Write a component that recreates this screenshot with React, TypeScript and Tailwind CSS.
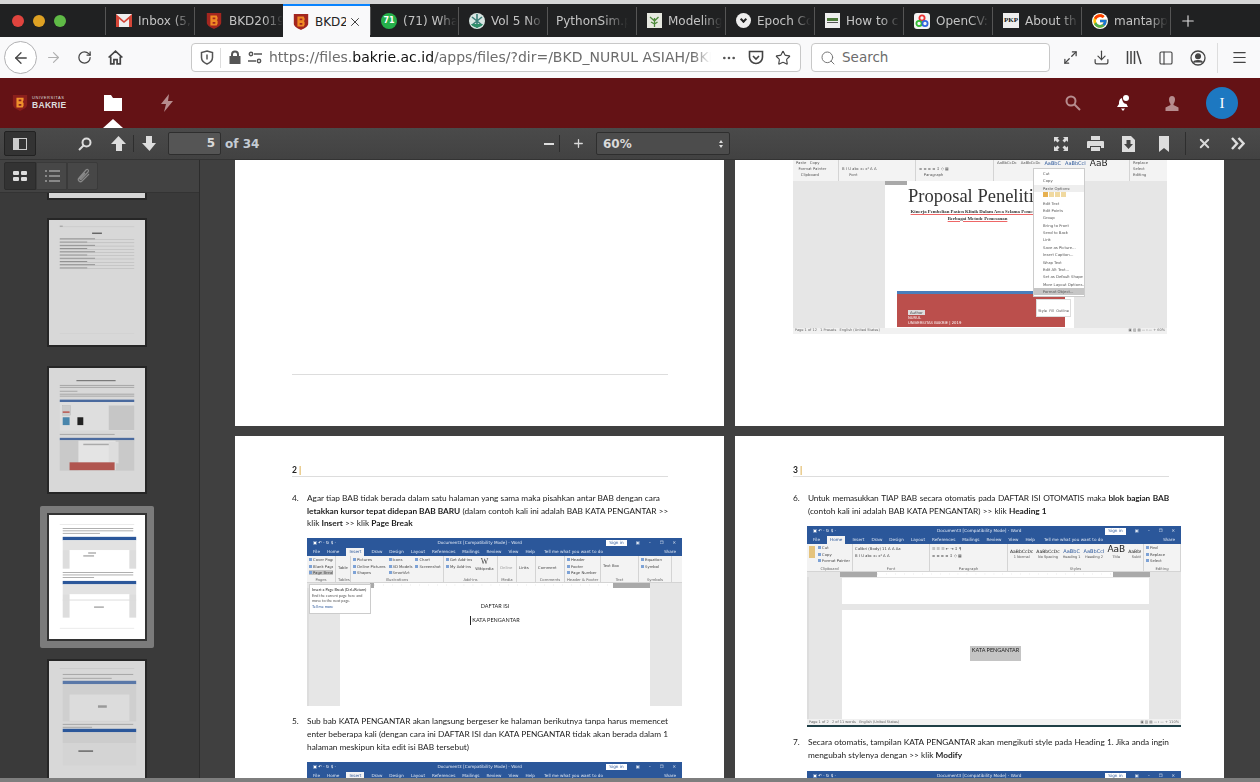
import type { ReactNode } from "react";
import { FcGoogle } from "react-icons/fc";
import {
  ArrowLeft,
  ArrowRight,
  Download,
  Ellipsis,
  Maximize2,
  Menu,
  PanelLeft,
  Plus,
  RotateCw,
  Search,
  Star,
  X,
} from "lucide-react";

const UI = "font-['DejaVu_Sans',sans-serif]";
const DOC = "font-['Lato',sans-serif]";

function Shield({ size = 18 }: { size?: number }) {
  return (
    <svg width={size} height={size} viewBox="0 0 18 20">
      <path d="M1 1h16v11c0 3-4 5-8 7-4-2-8-4-8-7z" fill="#a3261f" />
      <path d="M5 4h7l1 2v2l-1 1 1 1v3l-1 2H5z" fill="#f08a24" />
      <path d="M7.5 6h3v2h-3zM7.5 11h3v2h-3z" fill="#a3261f" />
    </svg>
  );
}

function Tab({ icon, label, active, w = "w-[89px]" }: { icon?: ReactNode; label: string; active?: boolean; w?: string }) {
  if (active) {
    return (
      <div className={`${w} h-full bg-[#f9f9fa] border-t-2 border-[#0a84ff] flex items-center pl-[9px] shrink-0`}>
        {icon}
        <span className="ml-[5px] text-[12px] text-[#222] w-[31px] overflow-hidden whitespace-nowrap">{label}</span>
        <X size={14} strokeWidth={1.6} className="ml-[2px] text-[#333]" />
      </div>
    );
  }
  return (
    <div className={`${w} h-[28px] border-l border-[#555] flex items-center pl-[10px] shrink-0`}>
      {icon && <span className="shrink-0 flex mr-[6px]">{icon}</span>}
      <span className={`${icon ? "w-[54px]" : "w-[72px] -ml-[2px]"} text-[12px] text-[#c4c4c4] overflow-hidden whitespace-nowrap [mask-image:linear-gradient(to_right,black_65%,transparent)]`}>
        {label}
      </span>
    </div>
  );
}

function TabBar() {
  return (
    <div className={`${UI} h-[33px] bg-[#202122] flex items-center shrink-0`}>
      <div className="w-[105px] flex items-center pl-[12px] gap-[9px] shrink-0">
        <span className="w-[12px] h-[12px] rounded-full bg-[#e0443e]" />
        <span className="w-[12px] h-[12px] rounded-full bg-[#dea123]" />
        <span className="w-[12px] h-[12px] rounded-full bg-[#5fba46]" />
      </div>
      <Tab
        label="Inbox (5,"
        icon={
          <svg width="16" height="13" viewBox="0 0 16 13">
            <rect width="16" height="13" fill="#eee" />
            <path d="M0 0l8 7 8-7v13h-3V5L8 9 3 5v8H0z" fill="#d44638" />
          </svg>
        }
      />
      <Tab label="BKD2019" icon={<Shield />} />
      <Tab label="BKD2" icon={<Shield />} active w="w-[87px]" />
      <Tab
        w="w-[88px]"
        label="(71) Wha"
        icon={
          <span className="w-[16px] h-[16px] rounded-full bg-[#25b04a] text-white text-[8px] font-bold flex items-center justify-center">71</span>
        }
      />
      <Tab
        label="Vol 5 No"
        icon={
          <svg width="16" height="16" viewBox="0 0 16 16">
            <circle cx="8" cy="8" r="8" fill="#d8e6e2" />
            <path d="M3 4l10 8M13 4L3 12M8 1v14" stroke="#3c7f78" strokeWidth="1.6" />
            <path d="M2 11a7 7 0 0 0 12 0z" fill="#2f8f6a" />
          </svg>
        }
      />
      <Tab label="PythonSim.pdf" />
      <Tab
        label="Modeling"
        icon={
          <svg width="15" height="15" viewBox="0 0 15 15">
            <rect width="15" height="15" fill="#e6e8e0" />
            <path d="M7.5 14V5M7.5 8L3 4M7.5 8l4-4M7.5 11L4 9M7.5 11l3-2" stroke="#4d8a3a" strokeWidth="1.3" />
          </svg>
        }
      />
      <Tab
        label="Epoch Co"
        icon={
          <span className="w-[15px] h-[15px] rounded-full bg-[#eee] flex items-center justify-center">
            <span className="w-[5px] h-[5px] rotate-45 border-r-2 border-b-2 border-[#222] -mt-[2px]" />
          </span>
        }
      />
      <Tab
        label="How to c"
        icon={
          <span className="w-[15px] h-[15px] bg-[#eee] flex flex-col justify-center items-center gap-[1px]">
            <span className="w-[11px] h-[3px] bg-[#4d7a3a]" />
            <span className="w-[11px] h-[1px] bg-[#555]" />
          </span>
        }
      />
      <Tab
        label="OpenCV:"
        icon={
          <svg width="16" height="16" viewBox="0 0 16 16">
            <rect width="16" height="16" rx="3" fill="#f4f4f4" />
            <circle cx="8" cy="5" r="2.6" fill="none" stroke="#e33" strokeWidth="1.8" />
            <circle cx="5" cy="10.5" r="2.6" fill="none" stroke="#3b3" strokeWidth="1.8" />
            <circle cx="11" cy="10.5" r="2.6" fill="none" stroke="#36d" strokeWidth="1.8" />
          </svg>
        }
      />
      <Tab
        label="About th"
        icon={<span className="w-[16px] h-[15px] bg-[#eee] text-[#111] text-[7px] leading-[15px] text-center font-['Liberation_Serif',serif] font-bold">PKP</span>}
      />
      <Tab label="mantapp" icon={<FcGoogle size={16} className="bg-white rounded-full" />} />
      <div className="h-[28px] border-l border-[#555] pl-[8px] flex items-center">
        <Plus size={18} strokeWidth={1.5} className="text-[#ddd]" />
      </div>
    </div>
  );
}

function NavBar() {
  return (
    <div className={`${UI} h-[41px] bg-[#f9f9fa] flex items-center shrink-0 text-[#444]`}>
      <div className="ml-[4px] w-[33px] h-[33px] rounded-full border border-[#b1b1b3] bg-white flex items-center justify-center shrink-0">
        <ArrowLeft size={18} strokeWidth={1.7} />
      </div>
      <ArrowRight size={17} strokeWidth={1.6} className="ml-[8px] text-[#b0b0b0] shrink-0" />
      <RotateCw size={15} strokeWidth={2} className="ml-[15px] shrink-0" />
      <svg width="17" height="17" viewBox="0 0 16 16" className="ml-[15px] shrink-0" fill="none" stroke="#444" strokeWidth="1.6">
        <path d="M1.5 8L8 2l6.5 6M3.5 7v7h3v-4h3v4h3V7" />
      </svg>
      <div className="ml-[67px] w-[610px] h-[29px] bg-white border border-[#c8c8c8] rounded-[4px] flex items-center shrink-0">
        <svg width="14" height="15" viewBox="0 0 14 15" className="ml-[8px]" fill="none" stroke="#555" strokeWidth="1.5">
          <path d="M7 1l5.5 1.5v5C12.5 11 9.5 13 7 14 4.5 13 1.5 11 1.500 7.500v-5zM7 4.500v5" />
        </svg>
        <span className="ml-[6px] w-px h-[20px] bg-[#ddd]" />
        <svg width="14" height="15" viewBox="0 0 14 15" className="ml-[7px]" fill="#555">
          <path d="M3 6V4.500a4 4 0 0 1 8 0V6h1.500v8h-11V6zm2 0h4V4.500a2 2 0 0 0-4 0z" />
        </svg>
        <svg width="14" height="13" viewBox="0 0 14 13" className="ml-[6px]" fill="none" stroke="#555" strokeWidth="1.4">
          <circle cx="3" cy="3" r="1.700" />
          <circle cx="11" cy="10" r="1.700" />
          <path d="M6 3h8M0 10h8" />
        </svg>
        <span className="ml-[7px] text-[14px] text-[#6c6c6c] w-[442px] overflow-hidden whitespace-nowrap [mask-image:linear-gradient(to_right,black_96%,transparent)]">
          https://files.<span className="text-[#111]">bakrie.ac.id</span>/apps/files/?dir=/BKD_NURUL ASIAH/BKD_2019
        </span>
        <Ellipsis size={16} className="ml-[10px] text-[#555]" />
        <svg width="16" height="15" viewBox="0 0 16 15" className="ml-[11px]" fill="none" stroke="#444" strokeWidth="1.6">
          <path d="M1.500 1.500h13V7a6.500 6.500 0 0 1-13 0zM5 6l3 3 3-3" />
        </svg>
        <Star size={16} strokeWidth={1.7} className="ml-[11px] text-[#444]" />
      </div>
      <div className="ml-[10px] w-[239px] h-[29px] bg-white border border-[#c8c8c8] rounded-[4px] flex items-center shrink-0">
        <Search size={16} strokeWidth={1.5} className="ml-[8px] text-[#777]" />
        <span className="ml-[6px] text-[13.500px] text-[#6c6c6c]">Search</span>
      </div>
      <Maximize2 size={15} strokeWidth={2} className="ml-[13px] shrink-0" />
      <Download size={17} strokeWidth={1.7} className="ml-[15px] shrink-0" />
      <svg width="16" height="15" viewBox="0 0 16 15" className="ml-[16px] shrink-0" stroke="#444" strokeWidth="1.500" fill="none">
        <path d="M1.500 1v13M5 1v13M8.500 1v13M11 1l4 13" />
      </svg>
      <PanelLeft size={16} strokeWidth={1.7} className="ml-[16px] shrink-0" />
      <svg width="16" height="16" viewBox="0 0 16 16" className="ml-[16px] shrink-0" fill="none" stroke="#444" strokeWidth="1.300">
        <circle cx="8" cy="8" r="7" />
        <circle cx="8" cy="6.300" r="2.400" fill="#444" />
        <path d="M3.500 12.500c1-2.500 8-2.500 9 0" fill="#444" />
      </svg>
      <span className="ml-[11px] w-px h-[30px] bg-[#ddd] shrink-0" />
      <Menu size={17} strokeWidth={1.7} className="ml-[13px] shrink-0" />
    </div>
  );
}

function AppHeader() {
  return (
    <div className="h-[50px] bg-[#641215] flex items-center shrink-0 relative">
      <div className="ml-[12px] w-[60px] flex items-center shrink-0">
        <svg width="16" height="18" viewBox="0 0 18 20">
          <path d="M1 1h16v11c0 3-4 5-8 7-4-2-8-4-8-7z" fill="#8a1f1c" />
          <path d="M5 4h8v3l-1 2 1 1v3l-1 2H5zM7.500 6v2h3V6zm0 5v2h3v-2z" fill="#f0922c" fillRule="evenodd" />
        </svg>
        <div className="ml-[4px] font-['Liberation_Sans',sans-serif] text-[#ddd] leading-none">
          <div className="text-[4px] tracking-[0.55px] mb-[1px]">UNIVERSITAS</div>
          <div className="text-[8.500px] font-bold tracking-[0.3px]">BAKRIE</div>
        </div>
      </div>
      <svg width="18" height="16" viewBox="0 0 18 16" className="ml-[32px] shrink-0" fill="#fff">
        <path d="M0 0h7l2 3h9v13H0z" />
      </svg>
      <svg width="13" height="18" viewBox="0 0 13 18" className="ml-[39px] shrink-0" fill="#b68c8e">
        <path d="M8 0L0 10h5l-2 8 9-11H7z" />
      </svg>
      <span className="absolute left-[103px] bottom-0 w-0 h-0 border-x-[10px] border-x-transparent border-b-[9px] border-b-white" />
      <div className="ml-auto flex items-center">
        <svg width="16" height="16" viewBox="0 0 16 16" fill="none" stroke="#b68c8e" strokeWidth="2">
          <circle cx="6" cy="6" r="4.500" />
          <path d="M9.500 9.500L15 15" />
        </svg>
        <svg width="14" height="17" viewBox="0 0 14 17" className="ml-[35px]" fill="#fff">
          <path d="M6 3C3 4 3 7 3 9l-2 3h11l-1.500-3C8 9 6 6 6 3zM5 13.500h4L7 16z" />
          <circle cx="10" cy="3" r="3" />
        </svg>
        <svg width="16" height="17" viewBox="0 0 16 17" className="ml-[34px]" fill="#b68c8e">
          <path d="M8 1c2 0 3 1.500 3 3.500 0 2-1 3.500-1.500 4.500v1l5 2.500V16H1.500v-3.500l5-2.500V9C6 8 5 6.500 5 4.500 5 2.500 6 1 8 1z" />
        </svg>
        <div className="ml-[26px] mr-[22px] w-[32px] h-[32px] rounded-full bg-[#1d78c1] flex items-center justify-center text-white text-[15px] font-['Liberation_Serif',serif]">
          I
        </div>
      </div>
    </div>
  );
}

function PdfToolbar() {
  return (
    <div className={`${UI} h-[32px] bg-gradient-to-b from-[#4a4a4a] to-[#424242] border-b border-[#333] flex items-center shrink-0 text-[#d9d9d9]`}>
      <div className="ml-[4px] w-[32px] h-[25px] bg-[#333] border border-[#222] rounded-[2px] flex items-center justify-center shrink-0">
        <span className="w-[14px] h-[12px] border border-[#ccc] flex">
          <span className="w-[5px] bg-[#ccc]" />
        </span>
      </div>
      <svg width="14" height="14" viewBox="0 0 14 14" className="ml-[42px] shrink-0" fill="none" stroke="#ddd" strokeWidth="2">
        <circle cx="8.500" cy="5.500" r="4" />
        <path d="M5.500 8.500L1 13" />
      </svg>
      <svg width="15" height="15" viewBox="0 0 15 15" className="ml-[19px] shrink-0" fill="#ddd">
        <path d="M7.500 0L15 8h-4v7H5V8H0z" />
      </svg>
      <span className="ml-[7px] w-px h-[17px] bg-[#2e2e2e] shrink-0" />
      <svg width="15" height="15" viewBox="0 0 15 15" className="ml-[8px] shrink-0" fill="#ddd">
        <path d="M7.500 15L0 7h4V0h6v7h4z" />
      </svg>
      <div className="ml-[11px] w-[53px] h-[23px] bg-[#555] border border-[#2e2e2e] rounded-[2px] text-right pr-[5px] text-[12px] font-bold leading-[21px] shrink-0">5</div>
      <span className="ml-[4px] text-[12px] font-bold text-[#c5ccd4] w-[32px] whitespace-nowrap shrink-0">of 34</span>
      <span className="ml-[287px] w-[10px] h-[2px] bg-[#ddd] shrink-0" />
      <span className="ml-[5px] w-px h-[17px] bg-[#2e2e2e] shrink-0" />
      <Plus size={13} strokeWidth={2.4} className="ml-[12px] shrink-0" />
      <div className="ml-[11px] w-[134px] h-[23px] bg-[#4c4c4c] border border-[#2e2e2e] rounded-[2px] flex items-center pl-[6px] pr-[6px] text-[12px] font-bold shrink-0">
        60%
        <span className="ml-auto flex flex-col gap-[2px]">
          <span className="w-0 h-0 border-x-[2.500px] border-x-transparent border-b-[3px] border-b-[#ddd]" />
          <span className="w-0 h-0 border-x-[2.500px] border-x-transparent border-t-[3px] border-t-[#ddd]" />
        </span>
      </div>
      <svg width="14" height="14" viewBox="0 0 14 14" className="ml-[324px] shrink-0" fill="#ddd">
        <path d="M0 0h5L3.500 1.500 5.500 3.500 3.500 5.500 1.500 3.500 0 5zM14 0v5l-1.500-1.500-2 2-2-2 2-2L9 0zM0 14V9l1.500 1.500 2-2 2 2-2 2L5 14zM14 14H9l1.500-1.500-2-2 2-2 2 2L14 9z" />
      </svg>
      <svg width="17" height="15" viewBox="0 0 17 15" className="ml-[19px] shrink-0" fill="#ddd">
        <path d="M4 0h9v4H4zM1 5h15a1 1 0 0 1 1 1v6h-3v-2H3v2H0V6a1 1 0 0 1 1-1zM4 11h9v4H4z" />
      </svg>
      <svg width="13" height="16" viewBox="0 0 13 16" className="ml-[18px] shrink-0">
        <path d="M0 0h9l4 4v12H0z" fill="#ddd" />
        <path d="M4.500 4h4v4h2.500l-4.500 5L2 8h2.500z" fill="#444" />
      </svg>
      <svg width="10" height="16" viewBox="0 0 10 16" className="ml-[24px] shrink-0" fill="#ddd">
        <path d="M0 0h10v16l-5-4-5 4z" />
      </svg>
      <span className="ml-[16px] w-px h-[23px] bg-[#2e2e2e] shrink-0" />
      <X size={15} strokeWidth={3} className="ml-[11px] shrink-0" />
      <svg width="14" height="13" viewBox="0 0 14 13" className="ml-[19px] shrink-0" fill="none" stroke="#ddd" strokeWidth="2.400">
        <path d="M1 1l5 5.500L1 12M7.500 1l5 5.500-5 5.500" />
      </svg>
    </div>
  );
}

// page thumbnails are just pictures, so they are drawn
function ThumbToc() {
  const rows = [0, 1, 2, 3, 4, 5, 6, 7, 8, 9];
  return (
    <svg viewBox="0 0 98 126" className="w-full h-full blur-[0.4px]">
      <rect x="11" y="6" width="76" height="0.4" fill="#bbb" />
      <rect x="11" y="5" width="3" height="1" fill="#999" />
      <rect x="44" y="12" width="10" height="1.500" fill="#666" />
      {rows.map((i) => (
        <g key={i}>
          <rect x="11" y={19 + i * 3.300 - 1} width={i % 2 ? 28 : 36} height="0.9" fill="#888" />
          <rect x="11" y={19 + i * 3.300} width="76" height="0.4" fill="#aaa" />
        </g>
      ))}
      <rect x="11" y="115" width="76" height="0.4" fill="#ccc" />
    </svg>
  );
}

function ThumbProposal() {
  return (
    <svg viewBox="0 0 98 126" className="w-full h-full blur-[0.4px]">
      <rect x="28" y="12" width="40" height="1.200" fill="#777" />
      {[17, 19, 23, 26, 28].map((y) => (
        <rect key={y} x="11" y={y} width={y === 23 ? 18 : 76} height="0.8" fill="#999" />
      ))}
      <rect x="11" y="32" width="76" height="2.500" fill="#4a6a9e" />
      <rect x="11" y="34.500" width="76" height="29" fill="#dedede" />
      <rect x="61" y="38" width="26" height="25" fill="#c6c6c6" />
      <rect x="14" y="38" width="8" height="10" fill="#ccc" stroke="#aaa" strokeWidth="0.3" />
      <rect x="14" y="44" width="7" height="1.500" fill="#b9554f" />
      <rect x="14" y="50" width="7" height="8" fill="#4a86ac" />
      <rect x="29" y="50" width="6" height="8" fill="#222" />
      <rect x="11" y="67" width="56" height="0.8" fill="#999" />
      <rect x="11" y="71" width="76" height="2.500" fill="#4a6a9e" />
      <rect x="11" y="73.500" width="76" height="31" fill="#c9c9c9" />
      <rect x="30" y="74" width="38" height="30" fill="#e4e4e4" />
      <rect x="35" y="77" width="28" height="1.500" fill="#aaa" />
      <rect x="61" y="75" width="10" height="22" fill="#ddd" />
      <rect x="21" y="96" width="46" height="8" fill="#b0554f" />
    </svg>
  );
}

function ThumbCurrent() {
  return (
    <svg viewBox="0 0 98 126" className="w-full h-full blur-[0.4px]">
      <rect x="11" y="9" width="76" height="0.4" fill="#ccc" />
      {[13, 15.500, 18].map((y, i) => (
        <rect key={y} x="14" y={y} width={i === 2 ? 38 : 72} height="0.8" fill="#999" />
      ))}
      <rect x="14" y="22" width="75" height="3.500" fill="#2b579a" />
      <rect x="14" y="25.500" width="75" height="10" fill="#e2e2e2" />
      <rect x="14" y="35.500" width="7" height="19" fill="#ddd" />
      <rect x="82" y="35.500" width="7" height="19" fill="#ddd" />
      <rect x="40" y="38" width="8" height="1" fill="#888" />
      <rect x="35" y="41" width="11" height="1" fill="#888" />
      {[58, 60.500, 63].map((y, i) => (
        <rect key={y} x="14" y={y} width={i === 2 ? 32 : 72} height="0.8" fill="#999" />
      ))}
      <rect x="14" y="67" width="75" height="3.500" fill="#2b579a" />
      <rect x="14" y="70.500" width="75" height="10" fill="#e2e2e2" />
      <rect x="14" y="80.500" width="7" height="24" fill="#ddd" />
      <rect x="82" y="80.500" width="7" height="24" fill="#ddd" />
      <rect x="14" y="86" width="75" height="1" fill="#ddd" />
      <rect x="46" y="93" width="10" height="1.500" fill="#aaa" />
      <rect x="11" y="115" width="76" height="0.4" fill="#ccc" />
    </svg>
  );
}

function ThumbNext() {
  return (
    <svg viewBox="0 0 98 117" className="w-full h-full blur-[0.4px]">
      <rect x="11" y="6" width="76" height="0.4" fill="#bbb" />
      {[12, 16].map((y) => (
        <rect key={y} x="14" y={y} width={y === 16 ? 50 : 72} height="0.8" fill="#999" />
      ))}
      <rect x="14" y="19" width="75" height="3.500" fill="#5a78a8" />
      <rect x="14" y="22.500" width="75" height="38" fill="#cfcfcf" />
      <rect x="21" y="33" width="61" height="27" fill="#dcdcdc" />
      <rect x="50" y="44" width="9" height="2.500" fill="#999" />
      {[63, 66].map((y) => (
        <rect key={y} x="14" y={y} width={y === 66 ? 30 : 72} height="0.8" fill="#999" />
      ))}
      <rect x="14" y="68" width="75" height="3.500" fill="#2b579a" />
      <rect x="14" y="71.500" width="75" height="11" fill="#ccc" />
      <rect x="14" y="82.500" width="75" height="23" fill="#d4d4d4" />
      <rect x="30" y="90" width="15" height="1.500" fill="#666" />
    </svg>
  );
}

function Sidebar() {
  return (
    <div className="w-[200px] shrink-0 bg-[#3a3a3a] border-r border-[#2c2c2c] flex flex-col overflow-hidden">
      <div className="h-[33px] shrink-0 bg-[#424242] border-b border-[#333] flex items-center pl-[4px]">
        <div className="w-[32px] h-[28px] bg-[#333] border border-[#2b2b2b] rounded-l-[2px] grid grid-cols-2 gap-[2px] p-[8px]">
          <span className="bg-[#ddd] rounded-[1px]" />
          <span className="bg-[#ddd] rounded-[1px]" />
          <span className="bg-[#ddd] rounded-[1px]" />
          <span className="bg-[#ddd] rounded-[1px]" />
        </div>
        <div className="w-[31px] h-[28px] bg-[#474747] border border-[#3a3a3a] flex flex-col justify-center gap-[3px] pl-[8px]">
          {[0, 1, 2].map((i) => (
            <span key={i} className="flex gap-[2px]">
              <span className="w-[2px] h-[2px] bg-[#888]" />
              <span className="w-[11px] h-[2px] bg-[#888]" />
            </span>
          ))}
        </div>
        <div className="w-[31px] h-[28px] bg-[#474747] border border-[#3a3a3a] rounded-r-[2px] flex items-center justify-center">
          <svg width="16" height="16" viewBox="0 0 16 16" fill="none" stroke="#888" strokeWidth="1.200">
            <path d="M14 6l-7 7c-2 2-5-1-3-3l7-8c1.500-1.500 3.500.5 2 2l-7 7.500c-.5.5-1.500-.5-1-1L10 5" />
          </svg>
        </div>
      </div>
      <div className="w-[100px] h-[7px] ml-[47px] bg-[#d6d6d6] border-x-2 border-b-2 border-[#262626] shrink-0" />
      <div className="w-[100px] h-[129px] mt-[18px] ml-[47px] bg-[#d8d8d8] border-2 border-[#262626] shrink-0">
        <ThumbToc />
      </div>
      <div className="w-[100px] h-[128px] mt-[19px] ml-[47px] bg-[#d8d8d8] border-2 border-[#262626] shrink-0">
        <ThumbProposal />
      </div>
      <div className="w-[114px] h-[142px] mt-[12px] ml-[40px] bg-[#7b7b7b] rounded-[2px] p-[7px] shrink-0">
        <div className="h-full bg-white border-2 border-[#333]">
          <ThumbCurrent />
        </div>
      </div>
      <div className="w-[100px] h-[119px] mt-[11px] ml-[47px] bg-[#d8d8d8] border-2 border-b-0 border-[#262626] shrink-0">
        <ThumbNext />
      </div>
    </div>
  );
}

function WordTitle({ active, title = "Document3 [Compatibility Mode]  -  Word" }: { active: string; title?: string }) {
  const tabs = ["File", "Home", "Insert", "Draw", "Design", "Layout", "References", "Mailings", "Review", "View", "Help"];
  return (
    <div className="bg-[#2b579a] text-[#dfe7f3] shrink-0">
      <div className="h-[10px] flex items-center px-[6px] text-[4.200px] leading-none">
        <span className="w-[40px] text-white whitespace-nowrap">▣ ↶ · ↻ $ ·</span>
        <span className="flex-1 text-center whitespace-nowrap">{title}</span>
        <span className="bg-white text-[#2b579a] px-[3px] py-[1px]">Sign in</span>
        <span className="ml-[9px]">▣</span>
        <span className="ml-[9px]">–</span>
        <span className="ml-[9px]">❐</span>
        <span className="ml-[9px]">✕</span>
      </div>
      <div className="h-[8px] flex items-center pl-[6px] text-[4.200px] leading-none gap-[7px] whitespace-nowrap">
        {tabs.map((t) =>
          t === active ? (
            <span key={t} className="bg-[#f3f3f3] text-[#2b579a] h-full px-[3px] flex items-center">{t}</span>
          ) : (
            <span key={t}>{t}</span>
          )
        )}
        <span className="ml-[2px]">Tell me what you want to do</span>
        <span className="ml-auto mr-[6px]">Share</span>
      </div>
    </div>
  );
}

function Group({ label, w, children }: { label: string; w: string; children: ReactNode }) {
  return (
    <div className={`${w} shrink-0 h-full border-r border-[#d4d4d4] flex flex-col px-[2px] pt-[1px]`}>
      <div className="flex-1 flex gap-[3px] overflow-hidden">{children}</div>
      <div className="text-center text-[3.800px] leading-[5px] text-[#666] whitespace-nowrap">{label}</div>
    </div>
  );
}

function Stack({ items, hi }: { items: string[]; hi?: string }) {
  return (
    <div className="flex flex-col gap-[1.500px] text-[3.800px] leading-[5px] text-[#444] whitespace-nowrap">
      {items.map((i) => (
        <span key={i} className={`flex items-center gap-[1px] ${i === hi ? "bg-[#c6c6c6]" : ""}`}>
          <span className="w-[3px] h-[3px] bg-[#7da2d6]" />
          {i}
        </span>
      ))}
    </div>
  );
}

function InsertRibbon() {
  return (
    <div className="h-[27px] bg-[#f3f3f3] border-b border-[#d4d4d4] flex shrink-0">
      <Group label="Pages" w="w-[29px]">
        <Stack items={["Cover Page", "Blank Page", "Page Break"]} hi="Page Break" />
      </Group>
      <Group label="Tables" w="w-[15px]"><span className="text-[3.800px] text-[#444] mt-[8px]">Table</span></Group>
      <Group label="Illustrations" w="w-[93px]">
        <Stack items={["Pictures", "Online Pictures", "Shapes"]} />
        <Stack items={["Icons", "3D Models", "SmartArt"]} />
        <Stack items={["Chart", "Screenshot"]} />
      </Group>
      <Group label="Add-ins" w="w-[54px]">
        <Stack items={["Get Add-ins", "My Add-ins"]} />
        <div className="text-[3.800px] text-[#444] text-center"><div className="text-[8px] leading-[9px] font-['Liberation_Serif',serif]">W</div>Wikipedia</div>
      </Group>
      <Group label="Media" w="w-[19px]"><span className="text-[3.800px] text-[#999] mt-[8px]">Online</span></Group>
      <Group label="" w="w-[19px]"><span className="text-[3.800px] text-[#444] mt-[8px]">Links</span></Group>
      <Group label="Comments" w="w-[29px]"><span className="text-[3.800px] text-[#444] mt-[8px]">Comment</span></Group>
      <Group label="Header & Footer" w="w-[36px]">
        <Stack items={["Header", "Footer", "Page Number"]} />
      </Group>
      <Group label="Text" w="w-[38px]"><span className="text-[3.800px] text-[#444] mt-[6px]">Text Box</span></Group>
      <Group label="Symbols" w="w-[33px]">
        <Stack items={["Equation", "Symbol"]} />
      </Group>
    </div>
  );
}

function HomeRibbon() {
  const styles = ["AaBbCcDc", "AaBbCcDc", "AaBbC", "AaBbCcI", "AaB", "AaBbCcC"];
  const names = ["1 Normal", "No Spacing", "Heading 1", "Heading 2", "Title", "Subtitle"];
  return (
    <div className="h-[28px] bg-[#f3f3f3] border-b border-[#d4d4d4] flex shrink-0">
      <Group label="Clipboard" w="w-[46px]">
        <span className="w-[8px] h-[12px] bg-[#e5c37c] mt-[1px]" />
        <Stack items={["Cut", "Copy", "Format Painter"]} />
      </Group>
      <Group label="Font" w="w-[77px]">
        <div className="text-[3.800px] leading-[7px] text-[#444] whitespace-nowrap">
          Calibri (Body) 11 A A Aa
          <br />
          B I U abc x₂ x² A A
        </div>
      </Group>
      <Group label="Paragraph" w="w-[78px]">
        <div className="text-[3.800px] leading-[7px] text-[#444] whitespace-nowrap">
          ☰ ☰ ☰ ⇤ ⇥ ↕ ¶
          <br />
          ≡ ≡ ≡ ≡ ↕ ◇ ▦
        </div>
      </Group>
      <Group label="Styles" w="w-[136px]">
        {styles.map((s, i) => (
          <div key={s + i} className="text-center whitespace-nowrap leading-none">
            <div className={`${i === 4 ? "text-[9px] text-[#222]" : i > 1 && i < 4 ? "text-[5px] text-[#2b579a]" : "text-[4.500px] text-[#222]"} h-[9px] flex items-end justify-center`}>{s}</div>
            <div className="text-[3.500px] text-[#555] mt-[2px]">{names[i]}</div>
          </div>
        ))}
      </Group>
      <Group label="Editing" w="w-[37px]">
        <Stack items={["Find", "Replace", "Select"]} />
      </Group>
    </div>
  );
}

function Ruler({ pad, left, mid }: { pad: string; left: string; mid: string }) {
  return (
    <div className="h-[5px] bg-[#e6e6e6] flex shrink-0">
      <span className={`${pad} shrink-0`} />
      <span className={`${left} bg-[#a9a9a9] shrink-0`} />
      <span className={`${mid} shrink-0 bg-white text-[3px] leading-[5px] text-[#888] tracking-[8px] overflow-hidden whitespace-nowrap`}>·······························</span>
      <span className="w-[37px] bg-[#a9a9a9] shrink-0" />
    </div>
  );
}

function VRuler({ children }: { children: ReactNode }) {
  return <div className="flex-1 flex border-l-2 border-[#ddd] bg-[#e6e6e6] overflow-hidden min-h-0">{children}</div>;
}

function Para({ n, lines }: { n: string; lines: { text: ReactNode; justify?: boolean; tight?: boolean }[] }) {
  return (
    <div className={`${DOC} text-[8.300px] leading-[12.700px] text-[#222] flex`}>
      <span className="w-[15px] shrink-0">{n}</span>
      <div className="w-[361px] shrink-0">
        {lines.map((l, i) => (
          <div key={i} className={`${l.justify ? "[text-align-last:justify]" : "whitespace-nowrap"} ${l.tight ? "tracking-[-0.15px]" : ""}`}>
            {l.text}
          </div>
        ))}
      </div>
    </div>
  );
}

function PageHead({ n }: { n: string }) {
  return (
    <div className={`${DOC} h-[41px] pt-[29px] text-[8.500px] leading-[10px] font-bold text-[#222]`}>
      <div className="border-b border-[#ddd] h-[12px]">
        {n} <span className="text-[#d9a63a]">|</span>
      </div>
    </div>
  );
}

function PageTwo() {
  return (
    <div className="w-[489px] shrink-0 bg-white pl-[57px] pr-[56px] overflow-hidden blur-[0.25px]">
      <PageHead n="2" />
      <div className="mt-[15px]">
        <Para
          n="4."
          lines={[
            { text: "Agar tiap BAB tidak berada dalam satu halaman yang sama maka pisahkan antar BAB dengan cara" },
            { text: <><b>letakkan kursor tepat didepan BAB BARU</b> (dalam contoh kali ini adalah BAB KATA PENGANTAR &gt;&gt;</> },
            { text: <>klik <b>Insert</b> &gt;&gt; klik <b>Page Break</b></> },
          ]}
        />
      </div>
      <div className={`${UI} mt-[8px] ml-[15px] w-[375px] h-[168px] flex flex-col relative`}>
        <WordTitle active="Insert" />
        <InsertRibbon />
        <Ruler pad="w-[63px]" left="w-[4px]" mid="w-[239px]" />
        <VRuler>
          <span className="w-[31px] shrink-0" />
          <div className={`${DOC} flex-1 bg-white flex flex-col items-center text-[5.500px] text-[#222]`}>
            <span className="mt-[14px]">DAFTAR ISI</span>
            <span className="mt-[6px] border-l border-[#222] pl-[1px]">KATA PENGANTAR</span>
          </div>
          <span className="w-[32px] shrink-0" />
        </VRuler>
        <div className={`${DOC} absolute left-[2px] top-[46px] w-[62px] h-[30px] bg-white border border-[#ccc] p-[2px] text-[3.800px] leading-[5px] text-[#555]`}>
          <div className="text-[#222] whitespace-nowrap">Insert a Page Break (Ctrl+Return)</div>
          <div className="mt-[1px]">End the current page here and move to the next page.</div>
          <div className="mt-[1px] text-[#2b579a]">Tell me more</div>
        </div>
      </div>
      <div className="mt-[9px]">
        <Para
          n="5."
          lines={[
            { text: "Sub bab KATA PENGANTAR akan langsung bergeser ke halaman berikutnya tanpa harus memencet", justify: true },
            { text: "enter beberapa kali (dengan cara ini DAFTAR ISI dan KATA PENGANTAR tidak akan berada dalam 1", justify: true },
            { text: "halaman meskipun kita edit isi BAB tersebut)" },
          ]}
        />
      </div>
      <div className={`${UI} mt-[9px] ml-[15px] w-[375px]`}>
        <WordTitle active="Insert" />
      </div>
    </div>
  );
}

function PageThree() {
  return (
    <div className="w-[489px] shrink-0 bg-white pl-[58px] pr-[55px] overflow-hidden blur-[0.25px]">
      <PageHead n="3" />
      <div className="mt-[15px]">
        <Para
          n="6."
          lines={[
            { text: <>Untuk memasukkan TIAP BAB secara otomatis pada DAFTAR ISI OTOMATIS maka <b>blok bagian BAB</b></>, justify: true, tight: true },
            { text: <>(contoh kali ini adalah BAB KATA PENGANTAR) &gt;&gt; klik <b>Heading 1</b></> },
          ]}
        />
      </div>
      <div className={`${UI} mt-[9px] ml-[14px] w-[374px] h-[201px] flex flex-col`}>
        <WordTitle active="Home" />
        <HomeRibbon />
        <Ruler pad="w-[33px]" left="w-[37px]" mid="w-[236px]" />
        <VRuler>
          <span className="w-[33px] shrink-0" />
          <div className="flex-1 flex flex-col">
            <div className="h-[26px] bg-white mt-[1px] shrink-0" />
            <div className={`${DOC} mt-[6px] flex-1 bg-white flex flex-col items-center text-[5.500px] text-[#222]`}>
              <span className="mt-[36px] px-[2px] pb-[6px] bg-[#c4c4c4]">KATA PENGANTAR</span>
            </div>
          </div>
          <span className="w-[32px] shrink-0" />
        </VRuler>
        <div className="h-[6px] bg-[#f1f1f1] flex items-center px-[2px] text-[3.500px] text-[#666] shrink-0 whitespace-nowrap">
          Page 1 of 2 &nbsp; 2 of 11 words &nbsp; English (United States)
          <span className="ml-auto">▣ ▥ ▤ — ı — + 110%</span>
        </div>
        <div className="h-[2px] bg-[#1f3f46] shrink-0" />
      </div>
      <div className="mt-[9px]">
        <Para
          n="7."
          lines={[
            { text: "Secara otomatis, tampilan KATA PENGANTAR akan mengikuti style pada Heading 1. Jika anda ingin", justify: true },
            { text: <>mengubah stylenya dengan &gt;&gt; klik <b>Modify</b></> },
          ]}
        />
      </div>
      <div className={`${UI} mt-[9px] ml-[14px] w-[374px]`}>
        <WordTitle active="" />
      </div>
    </div>
  );
}

function ContextMenu() {
  const items = ["Cut", "Copy", "Paste Options:", "", "Edit Text", "Edit Points", "Group", "Bring to Front", "Send to Back", "Link", "Save as Picture...", "Insert Caption...", "Wrap Text", "Edit Alt Text...", "Set as Default Shape", "More Layout Options...", "Format Object..."];
  return (
    <div className="absolute left-[240px] top-[8px] w-[52px] h-[129px] bg-white border border-[#ccc] flex flex-col justify-between py-[1px] text-[3.800px] text-[#555] leading-[7px] whitespace-nowrap overflow-hidden">
      {items.map((t, i) =>
        t === "" ? (
          <div key={i} className="h-[7px] flex gap-[1px] pl-[9px]">
            <span className="w-[5px] h-[5px] bg-[#e6b050]" />
            <span className="w-[5px] h-[5px] bg-[#f0d9a0]" />
            <span className="w-[5px] h-[5px] bg-[#f0d9a0]" />
            <span className="w-[5px] h-[5px] bg-[#f0d9a0]" />
          </div>
        ) : (
          <div key={i} className={`pl-[9px] ${t === "Paste Options:" ? "bg-[#eee]" : t === "Format Object..." ? "bg-[#c6c6c6]" : ""}`}>
            {t}
          </div>
        )
      )}
    </div>
  );
}

function TopRightPage() {
  return (
    <div className="w-[489px] h-[266px] shrink-0 bg-white pl-[58px] overflow-hidden blur-[0.25px]">
      <div className={`${UI} w-[374px] h-[174px] flex flex-col relative`}>
        <div className="h-[21px] bg-[#f3f3f3] flex shrink-0 text-[3.800px] text-[#555] whitespace-nowrap">
          <div className="w-[46px] border-r border-[#d4d4d4] pl-[3px] leading-[6px]">Paste &nbsp; Copy<br />&nbsp; Format Painter<br />&nbsp; &nbsp; Clipboard</div>
          <div className="w-[77px] border-r border-[#d4d4d4] pl-[3px] leading-[6px]"><br />B I U abc x₂ x² A A<br />&nbsp; &nbsp; &nbsp; Font</div>
          <div className="w-[78px] border-r border-[#d4d4d4] pl-[3px] leading-[6px]"><br />≡ ≡ ≡ ≡ ↕ ◇ ▦<br />&nbsp; &nbsp; Paragraph</div>
          <div className="w-[136px] border-r border-[#d4d4d4] pl-[3px] flex gap-[4px]">
            <span>AaBbCcDc</span>
            <span>AaBbCcDc</span>
            <span className="text-[5px] text-[#2b579a]">AaBbC</span>
            <span className="text-[5px] text-[#2b579a]">AaBbCcI</span>
            <span className="text-[9px] leading-[7px] text-[#222]">AaB</span>
          </div>
          <div className="pl-[3px] leading-[6px]">Replace<br />Select<br />Editing</div>
        </div>
        <div className="h-[4px] bg-[#e6e6e6] flex shrink-0">
          <span className="w-[92px] shrink-0" />
          <span className="w-[22px] bg-[#a9a9a9] shrink-0" />
          <span className="w-[167px] bg-white shrink-0" />
        </div>
        <div className="flex-1 flex bg-[#e6e6e6] min-h-0">
          <span className="w-[92px] shrink-0" />
          <div className="w-[189px] shrink-0 bg-white flex flex-col text-[#333] relative">
            <div className="font-['Liberation_Serif',serif] text-[18.500px] leading-[22px] pl-[23px] whitespace-nowrap">Proposal Penelitian</div>
            <div className="font-['Liberation_Serif',serif] text-[4.800px] leading-[6.500px] text-center font-bold mt-[2px] pr-[4px]">
              <div className="whitespace-nowrap underline decoration-[#e66]">Kinerja Pembelian Pasien Klinik Dalam Area Selama Pemesanan</div>
              <div className="underline decoration-[#e66]">Berbagai Metode Pemesanan</div>
            </div>
          </div>
        </div>
        <div className="h-[6px] bg-[#f1f1f1] flex items-center px-[2px] text-[3.500px] text-[#666] shrink-0 whitespace-nowrap">
          Page 1 of 12 &nbsp; 1 Presets &nbsp; English (United States)
          <span className="ml-auto">▣ ▥ ▤ — ı — + 60%</span>
        </div>
        <div className="absolute left-[104px] top-[131px] w-[168px] h-[36px] bg-[#bb4f4c] border-t-[3px] border-[#4a7ebb] text-white text-[3.800px] leading-[5px] pl-[11px] pt-[16px]">
          <span className="bg-[#ddd] text-[#444] px-[2px]">Author</span>
          <div>NURUL</div>
          <div>UNIVERSITAS BAKRIE | 2019</div>
        </div>
        <ContextMenu />
        <div className="absolute left-[243px] top-[139px] w-[35px] h-[18px] bg-white border border-[#ddd] flex items-end pb-[2px] justify-around text-[3.500px] text-[#555]">
          <span>Style</span>
          <span>Fill</span>
          <span>Outline</span>
        </div>
      </div>
    </div>
  );
}

function Viewer() {
  return (
    <div className="flex-1 bg-[#404040] pl-[35px] overflow-hidden flex flex-col gap-[10px]">
      <div className="flex gap-[11px] shrink-0">
        <div className="w-[489px] h-[266px] bg-white pl-[57px] pr-[56px] pt-[214px] shrink-0">
          <div className="border-b border-[#ddd]" />
        </div>
        <TopRightPage />
      </div>
      <div className="flex gap-[11px] flex-1 min-h-0">
        <PageTwo />
        <PageThree />
      </div>
    </div>
  );
}

export default function App() {
  return (
    <div className="w-[1260px] h-[782px] flex flex-col overflow-hidden bg-[#404040]">
      <div className="h-[4px] bg-[#d6d6d6] shrink-0" />
      <TabBar />
      <NavBar />
      <AppHeader />
      <PdfToolbar />
      <div className="flex-1 flex min-h-0">
        <Sidebar />
        <Viewer />
      </div>
      <div className="h-[4px] bg-[#7e7e7e] shrink-0" />
    </div>
  );
}
